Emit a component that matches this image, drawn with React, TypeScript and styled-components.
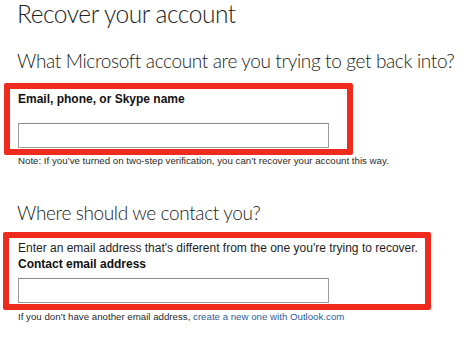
import React from "react";
import styled, { createGlobalStyle } from "styled-components";

const Global = createGlobalStyle`
  html, body { margin: 0; padding: 0; background: #ffffff; }
  body { font-family: "Liberation Sans", Arial, sans-serif; color: #1e1e1e; }
`;

const Page = styled.main`
  display: flex;
  flex-direction: column;
  width: 469px;
  height: 349px;
  overflow: hidden;
  box-sizing: border-box;
`;

const Title = styled.h1`
  margin: 0;
  padding-left: 17px;
  font-family: Lato, "Liberation Sans", sans-serif;
  font-weight: 300;
  font-size: 24.5px;
  letter-spacing: -0.45px;
  line-height: 28px;
  color: #222;
  white-space: nowrap;
`;

const Heading = styled.h2<{ $top: number }>`
  margin: ${(p) => p.$top}px 0 0 0;
  padding-left: 17px;
  font-family: Lato, "Liberation Sans", sans-serif;
  font-weight: 300;
  font-size: 19px;
  letter-spacing: -0.36px;
  line-height: 24px;
  color: #222;
  white-space: nowrap;
`;

const Highlight = styled.section<{ $left: number; $width: number; $top: number; $padTop: number }>`
  margin: ${(p) => p.$top}px 0 0 ${(p) => p.$left}px;
  width: ${(p) => p.$width}px;
  box-sizing: border-box;
  border: 6px solid #ef2b1d;
  border-radius: 2px;
  padding: ${(p) => p.$padTop}px 0 1px ${(p) => 18 - p.$left - 6}px;
  display: flex;
  flex-direction: column;
`;

const Label = styled.label<{ $gap: number }>`
  display: block;
  font-weight: bold;
  font-size: 12px;
  line-height: 14px;
  margin-bottom: ${(p) => p.$gap}px;
  color: #111;
`;

const Intro = styled.p`
  margin: 0;
  font-size: 12px;
  line-height: 17px;
  color: #1e1e1e;
  white-space: nowrap;
`;

const TextInput = styled.input`
  width: 311px;
  height: 25px;
  box-sizing: border-box;
  border: 1px solid #9c9c9c;
  border-top-color: #8a8a8a;
  background: #fff;
  margin: 0;
  padding: 0 4px;
  outline: none;
`;

const Small = styled.p<{ $top: number }>`
  margin: ${(p) => p.$top}px 0 0 0;
  padding-left: 18px;
  font-size: 9.7px;
  line-height: 12px;
  color: #2a2a2a;
  white-space: nowrap;
`;

const Link = styled.a`
  color: #2d5d9c;
  text-decoration: none;
`;

export default function App() {
  return (
    <>
      <Global />
      <Page>
        <Title>Recover your account</Title>
        <Heading $top={21}>What Microsoft account are you trying to get back into?</Heading>
        <Highlight $left={4} $width={349} $top={10} $padTop={3}>
          <Label $gap={17}>Email, phone, or Skype name</Label>
          <TextInput type="text" />
        </Highlight>
        <Small $top={0}>
          Note: If you’ve turned on two-step verification, you can’t recover your account this way.
        </Small>
        <Heading $top={34}>Where should we contact you?</Heading>
        <Highlight $left={3} $width={428} $top={7} $padTop={2}>
          <Intro>Enter an email address that's different from the one you're trying to recover.</Intro>
          <Label $gap={7}>Contact email address</Label>
          <TextInput type="text" />
        </Highlight>
        <Small $top={1}>
          If you don’t have another email address, <Link href="#">create a new one with Outlook.com</Link>
        </Small>
      </Page>
    </>
  );
}
